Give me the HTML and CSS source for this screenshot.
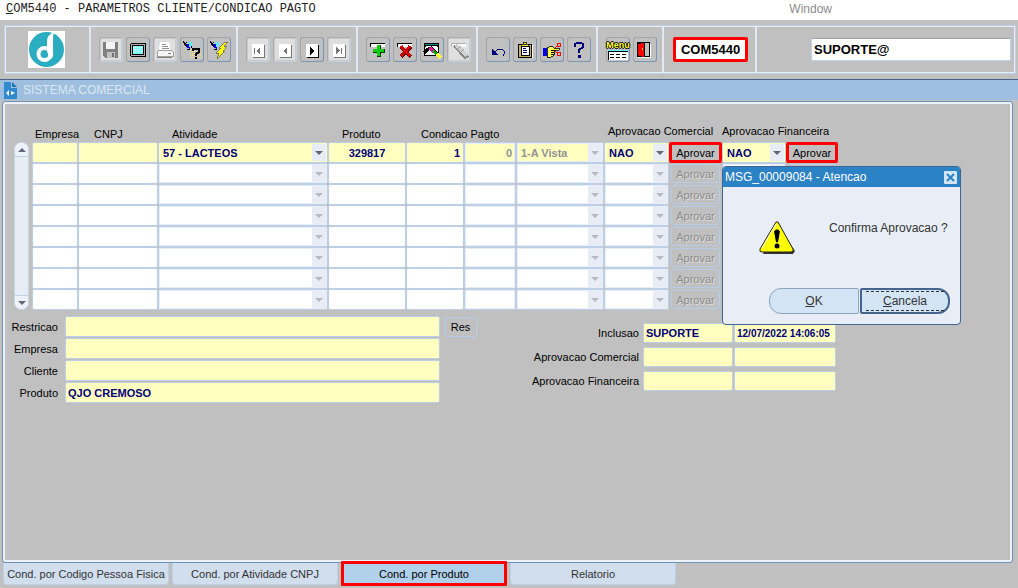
FILE: index.html
```html
<!DOCTYPE html>
<html lang="pt-BR">
  <head>
    <meta charset="utf-8">
    <meta name="viewport" content="width=device-width,initial-scale=1.0">
    <title>COM5440 - Parametros Cliente/Condicao Pagto</title>
    <link rel="stylesheet" href="styles.css">
  </head>
  <body>
    <header class="menubar">
      <h1><u>C</u>OM5440 - PARAMETROS CLIENTE/CONDICAO PAGTO</h1>
      <a href="#" class="menu-window">Window</a>
    </header>

    <div class="toolbar">
      <div class="group logo">
        <svg width="37" height="37" viewBox="0 0 37 37">
          <rect width="37" height="37" fill="#fff"/>
          <circle cx="18.5" cy="18.5" r="17.5" fill="#2badc1"/>
          <circle cx="16.500" cy="23" r="6" fill="none" stroke="#fff" stroke-width="4"/>
          <path d="M26 1Q19 4 19 10V20Q20 25 23 28Q26 25 25 20V10Q25 4 26 1Z" fill="#fff"/>
        </svg>
      </div>

      <div class="group">
        <button type="button" class="tool" aria-label="Salvar" disabled>
          <svg viewBox="0 0 20 20"><path d="M2 2H17V18H4L2 16Z" fill="#808080"/><path d="M5 2H14V9H5Z" fill="#f4f4f4"/><path d="M6 12H14V18H6Z" fill="#c0c0c0"/><path d="M11 13H13V17H11Z" fill="#707070"/></svg>
        </button>
        <button type="button" class="tool" aria-label="Tela">
          <svg viewBox="0 0 20 20"><path d="M3 3H17L18 4V16L17 17H3L2 16V4Z" fill="#000"/><path d="M3 4H17V16H3Z" fill="#b0b0b0"/><path d="M4 5H16V15H4Z" fill="#000"/><path d="M5 6H15V14H5Z" fill="#7ff"/><path d="M5 7.500H15M5 9.500H15M5 11.500H15" stroke="#fff" stroke-dasharray="1 1"/></svg>
        </button>
        <button type="button" class="tool" aria-label="Imprimir" disabled>
          <svg viewBox="0 0 20 20"><path d="M5 2H14L16 11H4Z" fill="#fff"/><path d="M7 4.500H11M7 6.500H13M7 8.500H14" stroke="#909090"/><path d="M2 12L4 10H16L18 12V16H2Z" fill="#f4f4f4" stroke="#a0a0a0"/><path d="M2 17.500H17M13 13.500H16" stroke="#808080"/></svg>
        </button>
        <button type="button" class="tool" aria-label="Entrar consulta">
          <svg viewBox="0 0 20 20"><path d="M9 9.500H19M8 11.500H20M8 13.500H20M8 15.500H20M9 17.500H20" stroke="#fff060" stroke-dasharray="1 1"/><path d="M3 4L7 4L8 9L5 8Z" fill="#00e"/><path d="M6 2L10 2V6L8 7Z" fill="#5ef"/><path d="M1 1L5 7M5 2L2 5M5 9H8M9 6V8" fill="none" stroke="#000"/><path d="M11 11V9H17V12L14 14V16M14 17V19" fill="none" stroke="#000" stroke-width="2"/></svg>
        </button>
        <button type="button" class="tool" aria-label="Executar consulta">
          <svg viewBox="0 0 20 20"><path d="M3 4L7 4L8 9L5 8Z" fill="#00e"/><path d="M6 2L10 2V6L8 7Z" fill="#5ef"/><path d="M1 1L5 7M5 2L2 5M5 9H8" stroke="#000"/><path d="M16 2H19L15 6H18L14 11H16L8 19L10 13H7L12 8H10Z" fill="#ff0" stroke="#665" stroke-width=".8"/></svg>
        </button>
      </div>

      <div class="group">
        <button type="button" class="tool" aria-label="Primeiro" disabled>
          <svg viewBox="0 0 20 20"><path d="M5 5H17V18H5Z" fill="#777"/><path d="M4 4H16V17H4Z" fill="#fff"/><path d="M6 8H7V14H6ZM12 7V14L8 11Z" fill="#777"/></svg>
        </button>
        <button type="button" class="tool" aria-label="Anterior" disabled>
          <svg viewBox="0 0 20 20"><path d="M5 5H17V18H5Z" fill="#777"/><path d="M4 4H16V17H4Z" fill="#fff"/><path d="M12 7V14L8 11Z" fill="#777"/></svg>
        </button>
        <button type="button" class="tool" aria-label="Proximo">
          <svg viewBox="0 0 20 20"><path d="M5 5H17V18H5Z" fill="#000"/><path d="M4 4H16V17H4Z" fill="#fff"/><path d="M8 7V15L13 11Z" fill="#000"/></svg>
        </button>
        <button type="button" class="tool" aria-label="Ultimo" disabled>
          <svg viewBox="0 0 20 20"><path d="M5 5H17V18H5Z" fill="#777"/><path d="M4 4H16V17H4Z" fill="#fff"/><path d="M12 8H13V14H12ZM7 7V14L11 11Z" fill="#777"/></svg>
        </button>
      </div>

      <div class="group">
        <button type="button" class="tool" aria-label="Inserir registro">
          <svg viewBox="0 0 20 20"><path d="M2 3H17V7H2Z" fill="#000"/><path d="M3 4H17V7H3Z" fill="#fff"/><path d="M9 5H13V9H17V13H13V17H9V13H5V9H9Z" fill="#063f06"/><path d="M9 5H12V9H16V12H12V16H9V12H5V9H9Z" fill="#10d010"/></svg>
        </button>
        <button type="button" class="tool" aria-label="Excluir registro">
          <svg viewBox="0 0 20 20"><path d="M2 3H17V7H2Z" fill="#000"/><path d="M3 4H17V7H3Z" fill="#fff"/><path d="M6 7L16 17M16 7L6 17" stroke="#600" stroke-width="3"/><path d="M6 6L15 16M15 6L6 16" stroke="#d00808" stroke-width="3"/></svg>
        </button>
        <button type="button" class="tool" aria-label="Limpar bloco">
          <svg viewBox="0 0 20 20"><path d="M2 3H17V16H2Z" fill="#000"/><path d="M3 7H16V15H3Z" fill="#fff"/><path d="M3 4H16V5H3Z" fill="#088"/><path d="M4 6H15V7H4Z" fill="#fff"/><path d="M2 13L6 9L9 8L17 16" fill="none" stroke="#000" stroke-width="3"/><path d="M8 8L12 12" stroke="#e0169c" stroke-width="4"/><path d="M11 11L15 14" stroke="#0a0" stroke-width="3"/><path d="M15 14L19 18" stroke="#ff3" stroke-width="4"/></svg>
        </button>
        <button type="button" class="tool" aria-label="Limpar registro" disabled>
          <svg viewBox="0 0 20 20"><path d="M2 3H17V7H2Z" fill="#b0b0b0"/><path d="M3 4H17V7H3Z" fill="#fff"/><path d="M6 5L18 18" stroke="#888" stroke-width="5"/><path d="M7 5L18 16" stroke="#d0d0d0" stroke-width="3"/><path d="M8 10L12 6M11 13L15 9" stroke="#999"/></svg>
        </button>
      </div>

      <div class="group">
        <button type="button" class="tool" aria-label="Desfazer">
          <svg viewBox="0 0 20 20"><path d="M6 13L10 9H14L16 11V14L15 16" fill="none" stroke="#007"/><path d="M4 9V15H10Z" fill="#007"/></svg>
        </button>
        <button type="button" class="tool" aria-label="Lista de valores">
          <svg viewBox="0 0 20 20"><path d="M4 5H18V18H4Z" fill="#fff"/><path d="M3 4H16V17H3Z" fill="#c8b860" stroke="#000"/><path d="M6 6H14V15H6Z" fill="#fff" stroke="#000"/><path d="M6 4H13V6H6ZM8 2H11V4H8Z" fill="#ff4" stroke="#000" stroke-width=".7"/><path d="M8 8.500H11M8 10.500H12M8 12.500H12" stroke="#007"/></svg>
        </button>
        <button type="button" class="tool" aria-label="Editar">
          <svg viewBox="0 0 20 20"><path d="M1 8H5V16H1Z" fill="#00e"/><path d="M5 8L9 6L12 8H17V10H12V15L9 17H5Z" fill="#ff4" stroke="#000" stroke-width=".8"/><path d="M9 10H12M9 12H12M9 14H12" stroke="#000"/><circle cx="17" cy="5" r="2" fill="none" stroke="#f00"/><circle cx="17" cy="14" r="2" fill="none" stroke="#f00"/><path d="M15 6L13 8M15 13L13 11" stroke="#f00"/></svg>
        </button>
        <button type="button" class="tool" aria-label="Ajuda">
          <svg viewBox="0 0 20 20"><path d="M6 7V4L8 3H12L14 4V7L10 10V13" fill="none" stroke="#007" stroke-width="2"/><path d="M9 15H12V18H9Z" fill="#007"/></svg>
        </button>
      </div>

      <div class="group">
        <button type="button" class="tool menu-tool" aria-label="Menu">
          <span class="menu-word">Menu</span>
          <svg viewBox="0 0 20 10"><path d="M0 0H20V10H0Z" fill="#fff"/><path d="M0 0H20V1H0Z" fill="#5ef"/><path d="M0 1H20V2H0ZM0 2H1V10H0Z" fill="#000"/><path d="M2 4.500H6M8 4.500H12M14 4.500H18M2 7.500H6M8 7.500H12M14 7.500H18" stroke="#000"/></svg>
        </button>
        <button type="button" class="tool" aria-label="Sair">
          <svg viewBox="0 0 20 20"><path d="M15 4H16V18H3V17H15Z" fill="#fff"/><path d="M2 2H15V17H2Z" fill="#000"/><path d="M10 3H14V16H10Z" fill="#c0c0c0"/><path d="M3 4L9 3V16L8 17L3 15Z" fill="#f00"/><path d="M7 8H8V10H7Z" fill="#ff0"/></svg>
        </button>
      </div>

      <div class="group program">
        <input type="text" class="program-code" value="COM5440" aria-label="Programa">
      </div>

      <div class="group user">
        <input type="text" class="user-name" value="SUPORTE@" aria-label="Usuario">
      </div>
    </div>

    <div class="titlebar">
      <svg width="13" height="17" viewBox="0 0 13 17"><path d="M0 0H7V6H13V17H0Z" fill="#2f8bcb"/><path d="M8 0L13 5H8Z" fill="#2474ae"/><path d="M5 8L2 11L5 14M7 9L11 11L7 13Z" fill="#fff"/></svg>
      <h2>SISTEMA COMERCIAL</h2>
    </div>

    <main class="panel">
      <div class="records">
        <div class="scroll">
          <button type="button" class="up" aria-label="Subir"></button>
          <button type="button" class="down" aria-label="Descer"></button>
        </div>
        <table>
          <colgroup>
            <col class="c-empresa"><col class="c-cnpj"><col class="c-atividade"><col class="c-produto">
            <col class="c-cond"><col class="c-dias"><col class="c-desc">
            <col class="c-sit-com"><col class="c-btn-com"><col class="c-sit-fin"><col class="c-btn-fin">
          </colgroup>
          <thead>
            <tr>
              <th class="h-empresa">Empresa</th>
              <th class="h-cnpj">CNPJ</th>
              <th class="h-atividade">Atividade</th>
              <th class="h-produto">Produto</th>
              <th class="h-cond" colspan="3">Condicao Pagto</th>
              <th class="h-com" colspan="2">Aprovacao Comercial</th>
              <th class="h-fin" colspan="2">Aprovacao Financeira</th>
            </tr>
          </thead>
          <tbody id="rows">
            <tr class="current">
              <td><input type="text" aria-label="Empresa"></td>
              <td><input type="text" aria-label="CNPJ"></td>
              <td><span class="drop"><select aria-label="Atividade"><option>57 - LACTEOS</option></select></span></td>
              <td><input type="text" class="center" value="329817" aria-label="Produto"></td>
              <td><input type="text" class="right" value="1" aria-label="Condicao"></td>
              <td><input type="text" class="right" value="0" aria-label="Dias" disabled></td>
              <td><span class="drop off"><select aria-label="Descricao" disabled><option>1-A Vista</option></select></span></td>
              <td><span class="drop"><select aria-label="Aprovacao Comercial"><option>NAO</option></select></span></td>
              <td><button type="button" class="aprovar marked">Aprovar</button></td>
              <td><span class="drop"><select aria-label="Aprovacao Financeira"><option>NAO</option></select></span></td>
              <td><button type="button" class="aprovar marked">Aprovar</button></td>
            </tr>
          </tbody>
        </table>
        <template id="blank-row">
          <tr>
            <td><input type="text" aria-label="Empresa"></td>
            <td><input type="text" aria-label="CNPJ"></td>
            <td><span class="drop off"><select aria-label="Atividade" disabled><option></option></select></span></td>
            <td><input type="text" aria-label="Produto"></td>
            <td><input type="text" aria-label="Condicao"></td>
            <td><input type="text" aria-label="Dias" disabled></td>
            <td><span class="drop off"><select aria-label="Descricao" disabled><option></option></select></span></td>
            <td><span class="drop off"><select aria-label="Aprovacao Comercial" disabled><option></option></select></span></td>
            <td><button type="button" class="aprovar" disabled>Aprovar</button></td>
            <td><span class="drop off"><select aria-label="Aprovacao Financeira" disabled><option></option></select></span></td>
            <td><button type="button" class="aprovar" aria-label="Aprovar" disabled></button></td>
          </tr>
        </template>
      </div>

      <div class="details">
        <form class="names">
          <label for="restricao">Restricao</label>
          <input type="text" id="restricao">
          <button type="button" class="res">Res</button>
          <label for="empresa">Empresa</label>
          <input type="text" id="empresa">
          <label for="cliente">Cliente</label>
          <input type="text" id="cliente">
          <label for="produto">Produto</label>
          <input type="text" id="produto" value="QJO CREMOSO">
        </form>

        <form class="audit">
          <label for="inclusao">Inclusao</label>
          <input type="text" id="inclusao" value="SUPORTE">
          <input type="text" class="date" value="12/07/2022 14:06:05" aria-label="Data inclusao">
          <label for="apr-com">Aprovacao Comercial</label>
          <input type="text" id="apr-com">
          <input type="text" class="date" aria-label="Data aprovacao comercial">
          <label for="apr-fin">Aprovacao Financeira</label>
          <input type="text" id="apr-fin">
          <input type="text" class="date" aria-label="Data aprovacao financeira">
        </form>
      </div>
    </main>

    <nav class="tabs">
      <button type="button">Cond. por Codigo Pessoa Fisica</button>
      <button type="button">Cond. por Atividade CNPJ</button>
      <button type="button" class="active">Cond. por Produto</button>
      <button type="button">Relatorio</button>
    </nav>

    <div class="alert" role="dialog" aria-labelledby="alert-title">
      <div class="alert-title">
        <span id="alert-title">MSG_00009084 - Atencao</span>
        <button type="button" class="close" aria-label="Fechar">
          <svg width="13" height="13" viewBox="0 0 13 13"><path d="M3 3L10 10M10 3L3 10" stroke="#2b82c4" stroke-width="2"/></svg>
        </button>
      </div>
      <div class="alert-body">
        <svg width="37" height="33" viewBox="0 0 37 33">
          <path d="M18 3L36 30L34 33H4Z" fill="#333"/>
          <path d="M17 1H19L34 28Q35 31 32 31H3Q0 31 1 28Z" fill="#ff0" stroke="#222"/>
          <path d="M3 27L17 3" stroke="#fff"/>
          <path d="M17 9H19Q21 9 20 13L18.500 21H17.500L16 13Q15 9 17 9Z" fill="#000" stroke="#000"/>
          <circle cx="18" cy="25" r="2.500" fill="#000"/>
        </svg>
        <p>Confirma Aprovacao ?</p>
      </div>
      <div class="alert-buttons">
        <button type="button" class="ok"><u>O</u>K</button>
        <button type="button" class="cancel"><span><u>C</u>ancela</span></button>
      </div>
    </div>

    <script>
      const rows = document.getElementById('rows');
      const blank = document.getElementById('blank-row');

      // the block always shows eight records
      while (rows.children.length < 8) {
        rows.appendChild(blank.content.cloneNode(true));
      }
    </script>
  </body>
</html>
```
FILE: styles.css
```css
* { box-sizing: border-box; }

body {
  margin: 0;
  min-height: 100vh;
  display: flex;
  flex-direction: column;
  position: relative;
  background: #c0c0c0;
  color: #000;
  font: 11px/14px "Liberation Sans", Arial, sans-serif;
}

h1, h2, p { margin: 0; font-weight: normal; }
button, input, select { font: inherit; color: inherit; margin: 0; padding: 0; }
button, select, input { border-radius: 2px; outline: none; }

/* menu */
.menubar {
  display: flex;
  justify-content: space-between;
  height: 20px;
  padding: 0 186px 0 6px;
  background: #fff;
}
.menubar h1 { font: 12px/18px "Liberation Mono", "Courier New", monospace; color: #222; }
.menu-window { font-size: 12px; line-height: 18px; color: #8c8c8c; text-decoration: none; }

/* toolbar */
.toolbar {
  display: flex;
  height: 49px;
  margin: 5px 2px 5px 4px;
  border: 1px solid #c0d0e6;
  box-shadow: inset 0 0 0 1px #e6eefa;
}
.group {
  display: flex;
  align-items: center;
  gap: 3px;
  padding: 0 5px 0 8px;
  border-right: 2px solid #dfe8f4;
}
.group.logo { width: 86px; padding: 0 2px 0 0; justify-content: center; }
.group.program { padding: 0 7px 0 9px; }
.group.user { flex: 1; justify-content: flex-end; padding-right: 4px; border: none; }

.tool {
  display: flex;
  align-items: center;
  justify-content: center;
  width: 24px;
  height: 25px;
  background: #c0c0c0;
  border: 1px solid;
  border-color: #a4a4a4 #7896b8 #7896b8 #a4a4a4;
  border-radius: 3px;
}
.tool:disabled { background: #dfdfdf; border-color: #acacac #c0d0e6 #c0d0e6 #acacac; box-shadow: inset 0 0 0 1px #cacaca; }
.tool svg { width: 20px; height: 20px; flex: none; shape-rendering: crispEdges; }
.menu-tool { flex-direction: column; }
.menu-tool svg { height: 10px; }
.menu-word {
  font-size: 9px;
  line-height: 10px;
  font-weight: bold;
  color: #ff3;
  text-shadow: 1px 0 #000, -1px 0 #000, 0 1px #000, 0 -1px #000;
}

.program-code {
  width: 75px;
  height: 25px;
  border: 3px solid #f00;
  background: #fff;
  font-size: 13px;
  font-weight: bold;
  text-align: center;
}
.user-name {
  width: 200px;
  height: 23px;
  padding: 0 2px;
  border: 1px solid #c0d0e6;
  border-top-color: #98a4b4;
  background: #fff;
  font-size: 13px;
  font-weight: bold;
}

.titlebar {
  display: flex;
  align-items: center;
  gap: 6px;
  height: 21px;
  padding-left: 4px;
  border-top: 1px solid #47648c;
  background: #9ebfdf;
}
.titlebar h2 { font-size: 12px; line-height: 20px; color: #dce7f2; }

/* main block */
.panel {
  flex: 1;
  margin: 1px 5px 0 2px;
  padding: 19px 0 16px 8px;
  border: 1px solid #6f92b8;
  border-radius: 3px;
  box-shadow: inset 0 0 0 2px #edf2f8;
}
.records { display: flex; gap: 3px; padding-left: 3px; }

.scroll {
  display: flex;
  flex-direction: column;
  justify-content: space-between;
  width: 15px;
  margin-top: 21px;
  background: #e8ecf5;
  border: 1px solid #c9d5e6;
  border-radius: 7px;
}
.scroll button {
  display: flex;
  align-items: center;
  justify-content: center;
  height: 14px;
  background: #edf2f8;
  border: 0 solid #c0d0e6;
}
.scroll .up { border-bottom-width: 1px; border-radius: 7px 7px 0 0; }
.scroll .down { border-top-width: 1px; border-radius: 0 0 7px 7px; }
.scroll button::after { content: ""; border: 4px solid transparent; }
.scroll .up::after { border-top: none; border-bottom-color: #60687c; }
.scroll .down::after { border-bottom: none; border-top-color: #60687c; }

table { width: 806px; table-layout: fixed; border-collapse: separate; border-spacing: 0; }
.c-empresa { width: 46px; }
.c-cnpj { width: 80px; }
.c-atividade { width: 170px; }
.c-produto { width: 78px; }
.c-cond { width: 58px; }
.c-dias { width: 52px; }
.c-desc { width: 88px; }
.c-sit-com { width: 65px; }
.c-btn-com { width: 53px; }
.c-sit-fin { width: 64px; }
.c-btn-fin { width: 52px; }

th { height: 21px; padding: 5px 0 0; font-weight: normal; text-align: left; white-space: nowrap; }
.h-empresa { padding-left: 3px; }
.h-cnpj { padding-left: 16px; }
.h-atividade { padding-left: 14px; }
.h-produto { padding-left: 14px; }
.h-cond { padding-left: 15px; }
.h-com, .h-fin { padding: 0 0 2px; }
.h-com { padding-left: 4px; }

td { height: 21px; padding: 0; }
td input, .drop {
  display: block;
  width: 100%;
  height: 21px;
  background: #fff;
  border: 1px solid #bccfe6;
  border-radius: 2px;
}
td input, .drop select, .names input, .audit input { color: #000078; font-weight: bold; }
td input { padding: 0 3px; }
td input:disabled, .drop.off { box-shadow: inset 0 0 0 1px #e9eef6; }
.current input, .current .drop { background: #ffffc0; }
.center { text-align: center; }
.right { text-align: right; }

.drop { position: relative; }
.drop select {
  display: block;
  width: 100%;
  height: 19px;
  padding: 0 16px 0 4px;
  appearance: none;
  background: transparent;
  border: none;
  opacity: 1;
}
.drop::before {
  content: "";
  position: absolute;
  top: 1px;
  right: 1px;
  bottom: 1px;
  width: 14px;
  background: #e8ecf5;
}
.drop::after {
  content: "";
  position: absolute;
  top: 8px;
  right: 4px;
  border: 4px solid transparent;
  border-bottom: none;
  border-top-color: #60687c;
}
.drop.off::after { border-top-color: #b6bac0; }
.current input:disabled, .drop.off select { color: #929292; }

.aprovar {
  display: block;
  width: 49px;
  height: 19px;
  margin: 1px auto;
  background: #c0c0c0;
  border: 1px solid #b6cdea;
  border-radius: 3px;
}
.aprovar:disabled { color: #8c8c8c; text-shadow: 1px 1px #dedede; }
.aprovar.marked { width: 100%; height: 21px; margin: 0; border: 3px solid #f00; border-radius: 2px; }

/* fields under the block */
.details { display: flex; align-items: flex-start; margin-top: 6px; }
.names, .audit { display: grid; align-items: center; }
.names { grid-template-columns: 50px 375px 33px; gap: 1px 4px; }
.names label, .audit label { text-align: right; white-space: nowrap; padding-right: 3px; }
.names label { grid-column: 1; }
.names input, .audit input {
  width: 100%;
  background: #ffffc0;
  border: 1px solid #bccfe6;
  padding: 0 2px;
}
.names input { height: 21px; }
.res { height: 20px; background: #c0c0c0; border: 1px solid #b6cdea; border-radius: 3px; }

.audit { grid-template-columns: 110px 90px 102px; gap: 4px 1px; margin: 7px 0 0 55px; }
.audit input { height: 20px; }
.audit .date { font-size: 10px; }

/* tab pages */
.tabs { display: flex; gap: 3px; height: 25px; padding-left: 3px; }
.tabs button {
  width: 166px;
  height: 22px;
  background: #d1deed;
  border: 1px solid #bccfe6;
  border-top: none;
  border-radius: 0 0 4px 4px;
  color: #333;
}
.tabs .active {
  height: 25px;
  margin-top: -2px;
  background: #b1d0ea;
  border: 3px solid #f00;
  border-radius: 1px;
  color: #000;
}

/* confirmation window */
.alert {
  position: absolute;
  top: 166px;
  left: 722px;
  width: 239px;
  border: 1px solid #3c6496;
  border-radius: 4px;
  background: #e9eef6;
  overflow: hidden;
  font-size: 12px;
  color: #333;
}
.alert-title {
  display: flex;
  align-items: center;
  justify-content: space-between;
  height: 20px;
  padding: 0 3px 0 2px;
  background: #2b82c4;
  color: #fff;
}
.close { display: flex; width: 13px; height: 13px; border: none; border-radius: 1px; background: #d4e6f4; }
.alert-body { display: flex; gap: 33px; padding: 34px 0 0 36px; height: 101px; }
.alert-buttons { display: flex; gap: 1px; height: 36px; padding-left: 46px; }
.alert-buttons button { width: 90px; height: 26px; background: #d3e5f5; }
.ok { border: 1px solid #8ca4be; border-radius: 12px 2px 2px 12px; }
.cancel { padding: 1px 4px; border: 2px solid #47648c; border-radius: 2px 12px 12px 2px; }
.cancel span { display: block; border: dashed #333; border-width: 1px 0; line-height: 18px; }
```
